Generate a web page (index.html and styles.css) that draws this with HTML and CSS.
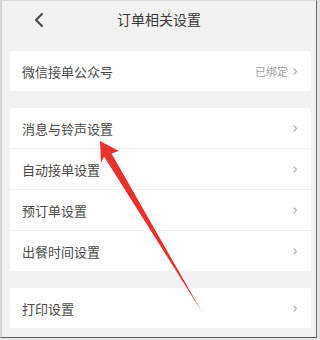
FILE: index.html
```html
<!DOCTYPE html>
<html>
<head>
<meta charset="utf-8">
<link rel="stylesheet" href="styles.css">
</head>
<body>
<div class="frame">

<!--header-->
<div class="header">
	<svg class="back" width="12" height="16" viewBox="0 0 12 16"><path d="M9 2 L3 8 L9 14" fill="none" stroke="#444" stroke-width="2" stroke-linecap="round" stroke-linejoin="round"/></svg>
	<div class="title">订单相关设置</div>
</div>

<!--group 1-->
<div class="card">
	<div class="item">
		<span class="label">微信接单公众号</span>
		<span class="extra">已绑定<svg class="more" width="6" height="9" viewBox="0 0 6 9"><path d="M2 2 L4.5 4.5 L2 7" fill="none" stroke="#b0b0b0" stroke-width="1.2" stroke-linecap="round" stroke-linejoin="round"/></svg></span>
	</div>
</div>

<!--group 2-->
<div class="card">
	<div class="item line">
		<span class="label">消息与铃声设置</span>
		<span class="extra"><svg class="more" width="6" height="9" viewBox="0 0 6 9"><path d="M2 2 L4.5 4.5 L2 7" fill="none" stroke="#b0b0b0" stroke-width="1.2" stroke-linecap="round" stroke-linejoin="round"/></svg></span>
	</div>
	<div class="item line">
		<span class="label">自动接单设置</span>
		<span class="extra"><svg class="more" width="6" height="9" viewBox="0 0 6 9"><path d="M2 2 L4.5 4.5 L2 7" fill="none" stroke="#b0b0b0" stroke-width="1.2" stroke-linecap="round" stroke-linejoin="round"/></svg></span>
	</div>
	<div class="item line">
		<span class="label">预订单设置</span>
		<span class="extra"><svg class="more" width="6" height="9" viewBox="0 0 6 9"><path d="M2 2 L4.5 4.5 L2 7" fill="none" stroke="#b0b0b0" stroke-width="1.2" stroke-linecap="round" stroke-linejoin="round"/></svg></span>
	</div>
	<div class="item">
		<span class="label">出餐时间设置</span>
		<span class="extra"><svg class="more" width="6" height="9" viewBox="0 0 6 9"><path d="M2 2 L4.5 4.5 L2 7" fill="none" stroke="#b0b0b0" stroke-width="1.2" stroke-linecap="round" stroke-linejoin="round"/></svg></span>
	</div>
</div>

<!--group 3-->
<div class="card">
	<div class="item">
		<span class="label">打印设置</span>
		<span class="extra"><svg class="more" width="6" height="9" viewBox="0 0 6 9"><path d="M2 2 L4.5 4.5 L2 7" fill="none" stroke="#b0b0b0" stroke-width="1.2" stroke-linecap="round" stroke-linejoin="round"/></svg></span>
	</div>
</div>

<!--red arrow overlay-->
<svg class="arrow" width="320" height="340" viewBox="0 0 320 340">
	<polygon points="100,141 119,151 111.5,153.5 202,312 104,156.5 101,163" fill="#e8302c"/>
</svg>

</div>
</body>
</html>
```

FILE: styles.css
```css
body {
	margin: 0;
	background-color: #e4e4e4;
	font-family: "Noto Sans CJK SC", "Noto Sans", sans-serif;
}
.frame {
	position: relative;
	width: 314px;
	height: 336px;
	background-color: #f2f2f2;
	border-top: 1px solid #dcdcdc;
	border-left: 2px solid #d6d6d6;
	border-right: 1px solid #6a6a6a;
	border-bottom: 1px solid #5a5a5a;
	overflow: hidden;
}
.header {
	position: relative;
	height: 36px;
	display: flex;
	align-items: center;
	justify-content: center;
	margin-bottom: 14px;
}
.back {
	position: absolute;
	left: 31px;
	top: 11px;
}
.title {
	font-size: 14px;
	color: #383838;
}
.card {
	background-color: #fff;
	margin: 0 5px 17px 8px;
	border-radius: 2px;
}
.item {
	height: 40px;
	display: flex;
	align-items: center;
	justify-content: space-between;
	padding: 0 13px 0 12px;
}
.item.line {
	border-bottom: 1px solid #f0f0f0;
}
.label {
	font-size: 13px;
	color: #4a4a4a;
}
.extra {
	display: flex;
	align-items: center;
	font-size: 11px;
	color: #a0a0a0;
}
.more {
	margin-left: 4px;
}
.arrow {
	position: absolute;
	left: -2px;
	top: -1px;
}
```
